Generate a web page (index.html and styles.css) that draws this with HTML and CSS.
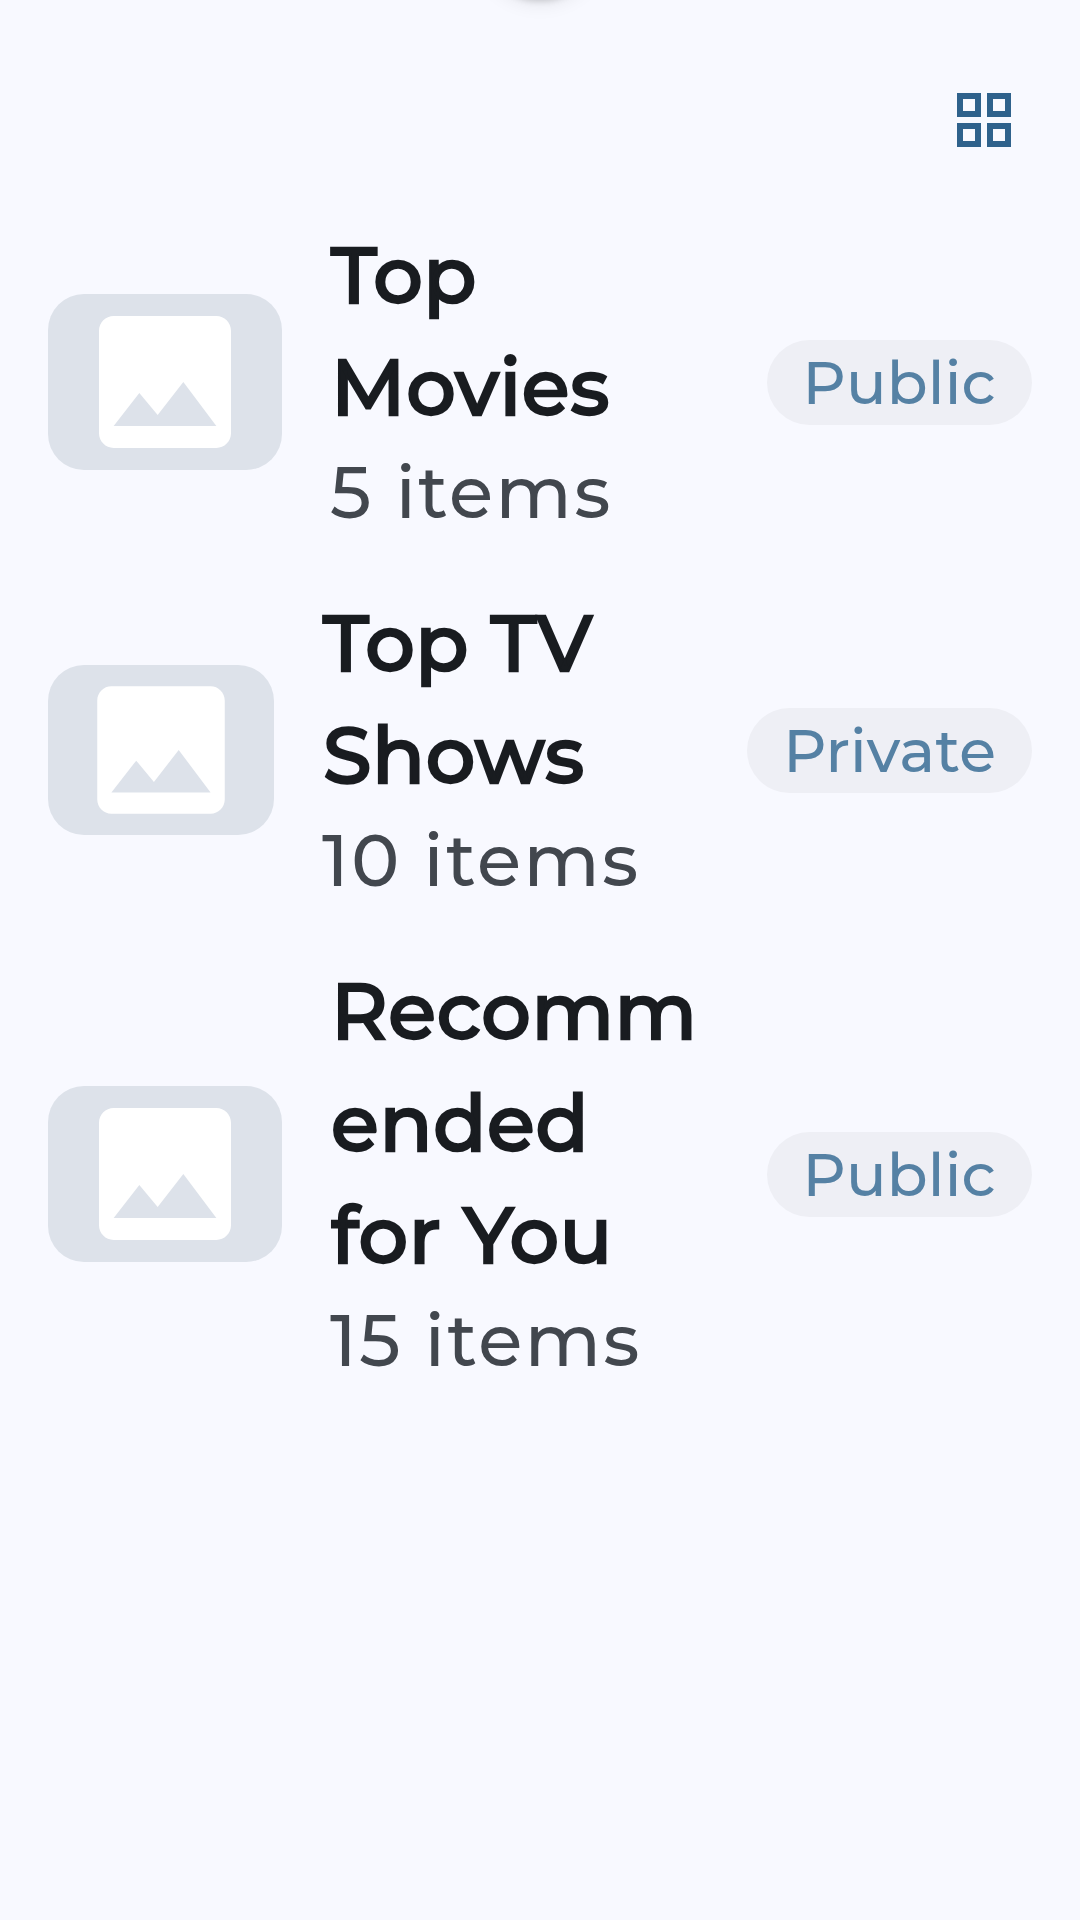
FILE: index.html
```html
<!DOCTYPE html>
<html lang="en">
<head>
<meta charset="utf-8">
<title>Lists</title>
<link rel="stylesheet" href="styles.css">
</head>
<body>
<div class="handle"></div>
<header class="toolbar">
  <button class="view-toggle" aria-label="Grid view">
    <svg viewBox="0 0 54 54" width="54" height="54" fill="none" stroke="currentColor" stroke-width="6">
      <path d="M3 3h18v18H3zM33 3h18v18H33zM3 33h18v18H3zM33 33h18v18H33z"/>
    </svg>
  </button>
</header>
<main class="lists">
  <article class="row">
    <div class="thumb">
      <svg viewBox="0 0 24 24"><path d="M21 19V5c0-1.1-.9-2-2-2H5c-1.1 0-2 .9-2 2v14c0 1.1.9 2 2 2h14c1.1 0 2-.9 2-2zM8.5 13.5l2.5 3.01L14.500 12l4.500 6H5l3.500-4.500z"/></svg>
    </div>
    <div class="info">
      <h2 class="title">Top<br>Movies</h2>
      <p class="count">5 items</p>
    </div>
    <span class="chip">Public</span>
  </article>
  <article class="row">
    <div class="thumb thumb-narrow">
      <svg viewBox="0 0 24 24"><path d="M21 19V5c0-1.1-.9-2-2-2H5c-1.1 0-2 .9-2 2v14c0 1.1.9 2 2 2h14c1.1 0 2-.9 2-2zM8.5 13.5l2.5 3.01L14.500 12l4.500 6H5l3.500-4.500z"/></svg>
    </div>
    <div class="info">
      <h2 class="title">Top TV<br>Shows</h2>
      <p class="count">10 items</p>
    </div>
    <span class="chip">Private</span>
  </article>
  <article class="row">
    <div class="thumb">
      <svg viewBox="0 0 24 24"><path d="M21 19V5c0-1.1-.9-2-2-2H5c-1.1 0-2 .9-2 2v14c0 1.1.9 2 2 2h14c1.1 0 2-.9 2-2zM8.5 13.5l2.5 3.01L14.500 12l4.500 6H5l3.500-4.500z"/></svg>
    </div>
    <div class="info">
      <h2 class="title">Recomm<br>ended<br>for You</h2>
      <p class="count">15 items</p>
    </div>
    <span class="chip">Public</span>
  </article>
</main>
</body>
</html>
```
FILE: styles.css
```css
* { box-sizing: border-box; }

body {
  margin: 0;
  min-height: 1920px;
  background: #f8f9ff;
  color: #191c20;
  font-family: Montserrat, Inter, sans-serif;
  overflow: hidden;
}

/* Round control scrolled off the top edge; only its shadow shows */
.handle {
  position: absolute;
  top: -122px;
  left: 480px;
  width: 120px;
  height: 120px;
  border-radius: 50%;
  box-shadow: 0 3px 6px rgba(0, 0, 0, .16), 0 4px 20px rgba(0, 0, 0, .1);
}

.toolbar {
  display: flex;
  justify-content: flex-end;
  height: 222px;
  padding: 93px 69px 0 0;
}

.view-toggle {
  display: block;
  width: 54px;
  height: 54px;
  padding: 0;
  border: 0;
  background: none;
  color: #2f628c;
}

.view-toggle svg { display: block; }

.lists {
  display: flex;
  flex-direction: column;
  gap: 48px;
  padding: 0 48px;
}

.row {
  display: flex;
  align-items: center;
  gap: 48px;
}

.thumb {
  display: flex;
  justify-content: center;
  flex: none;
  width: 234px;
  height: 176px;
  border-radius: 36px;
  background: #dde2ea;
}

.thumb-narrow {
  width: 226px;
  height: 170px;
}

.thumb svg {
  height: 100%;
  fill: #fff;
}

.info {
  flex: 1;
  min-width: 0;
  white-space: nowrap;
}

/* Medium weight thickened with an outline */
.title {
  margin: -3px 0 0;
  padding-left: 1px;
  font-size: 78px;
  font-weight: 500;
  line-height: 112px;
  letter-spacing: .65px;
  -webkit-text-stroke: 2.4px #191c20;
}

.count {
  margin: 1px 0 2px;
  color: #42474e;
  font-size: 72px;
  font-weight: 500;
  line-height: 96px;
  letter-spacing: 2.5px;
}

.chip {
  flex: none;
  height: 85px;
  padding: 0 36px;
  border-radius: 43px;
  background: #eeeff5;
  color: #5581a4;
  font-size: 60px;
  font-weight: 500;
  line-height: 85px;
  letter-spacing: .15px;
}
```
